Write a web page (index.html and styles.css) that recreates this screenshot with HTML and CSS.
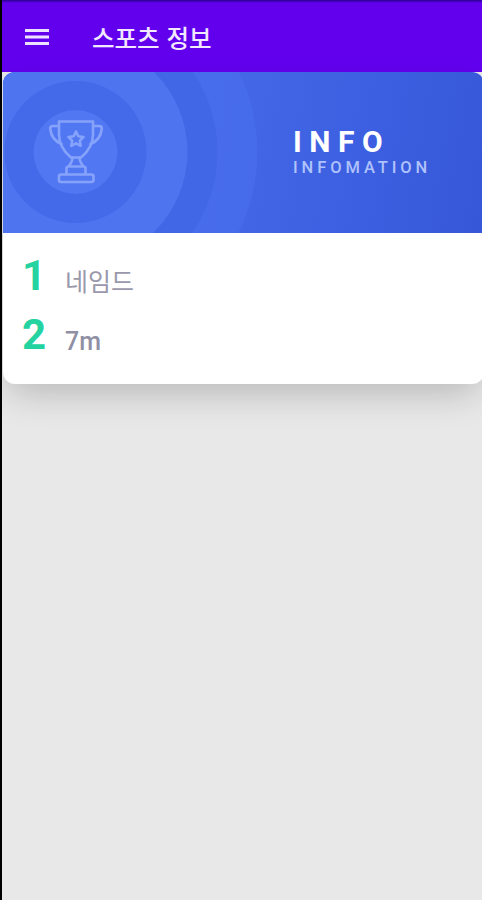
FILE: index.html
```html
<!DOCTYPE html>
<html lang="ko">

<head>
    <meta charset="UTF-8">
    <meta name="viewport" content="width=device-width, initial-scale=1.0">
    <title>스포츠 정보</title>
    <link rel="stylesheet" href="styles.css">
</head>

<body>
    <header class="app-bar">
        <svg class="menu-icon" width="24" height="18" viewBox="0 0 24 18">
            <path d="M0 1.500h24M0 8h24M0 14.500h24" />
        </svg>
        <h1>스포츠 정보</h1>
    </header>

    <main class="card">
        <div class="banner">
            <svg class="rings" width="480" height="161" viewBox="0 0 480 161">
                <circle cx="72.5" cy="80" r="182" fill="#4a6ff0" fill-opacity=".5" />
                <circle cx="72.5" cy="80" r="142" fill="#4166e5" fill-opacity=".85" />
                <circle cx="72.5" cy="80" r="112" fill="#4e74f0" />
                <circle cx="72.5" cy="80" r="71" fill="#4469e9" />
                <circle cx="72.5" cy="80" r="42" fill="#5277f2" />
            </svg>
            <svg class="trophy" width="54" height="64" viewBox="0 0 54 64">
                <path d="M10 1.5h34v13c0 11-6 18-12 23h-10c-6-5-12-12-12-23z" />
                <path d="M10 6H4c-2 0-3 1-2.700 3C2 16 5 21 12.500 24M44 6h6c2 0 3 1 2.700 3C52 16 49 21 41.500 24" />
                <path d="M23.500 37.500c0 4-1.500 6-4 9h15c-2.500-3-4-5-4-9M17.500 54v-5.500q0-2 2-2h15q2 0 2 2V54" />
                <rect x="10" y="54.500" width="34.500" height="7.500" rx="2" />
                <path d="M27 11.500l2.300 4.700 5.200.8-3.700 3.600.9 5.200-4.700-2.500-4.700 2.500.9-5.200-3.700-3.600 5.200-.8z" />
            </svg>
            <div class="banner-text">
                <h2>INFO</h2>
                <p>INFOMATION</p>
            </div>
        </div>
        <ol class="site-list">
            <li><span class="num">1</span><span class="name">네임드</span></li>
            <li><span class="num">2</span><span class="name latin">7m</span></li>
        </ol>
    </main>
</body>

</html>
```
FILE: styles.css
```css
body {
    font-family: Roboto, "Noto Sans CJK KR", sans-serif;
    background: #e8e8e8;
    margin: 0;
    min-height: 100vh;
    box-sizing: border-box;
    border-left: 2px solid #000;
    overflow: hidden;
}

h1,
h2,
p,
ol {
    margin: 0;
    padding: 0;
}

.app-bar {
    height: 72px;
    box-sizing: border-box;
    padding: 4px 0 0 23px;
    display: flex;
    align-items: center;
    gap: 43px;
    background: linear-gradient(#2b0090, #6200ee 3px);
}

.menu-icon {
    stroke: #eee1ff;
    stroke-width: 3;
}

h1 {
    font-family: "Noto Sans CJK KR", sans-serif;
    font-size: 24.5px;
    font-weight: 500;
    line-height: 36px;
    color: #f2e8ff;
}

.card {
    width: 481px;
    height: 312px;
    margin-left: 1px;
    border-radius: 12px;
    background: #fff;
    box-shadow: 0 14px 36px -6px rgba(0, 0, 0, 0.22);
    overflow: hidden;
}

.banner {
    position: relative;
    height: 161px;
    display: flex;
    background: linear-gradient(100deg, #4d73f4 0%, #4366e6 50%, #3b5fe0 75%, #3658d8 100%);
}

.rings {
    position: absolute;
    top: 0;
    left: 0;
}

.trophy {
    position: relative;
    margin: 48px 0 0 46px;
    fill: none;
    stroke: #86a3fb;
    stroke-width: 2.6;
    stroke-linejoin: round;
    stroke-linecap: round;
}

.banner-text {
    position: relative;
    margin: 53px 0 0 190px;
    color: #fff;
}

h2 {
    font-size: 30px;
    line-height: 34px;
    font-weight: 700;
    letter-spacing: 7.5px;
}

.banner-text p {
    font-size: 16.5px;
    line-height: 17px;
    font-weight: 500;
    letter-spacing: 3.9px;
    color: #b0c2fb;
}

.site-list {
    list-style: none;
    padding: 13px 18px 0 19px;
}

.site-list li {
    height: 59px;
    display: flex;
    align-items: baseline;
}

.num {
    width: 43px;
    font-size: 42px;
    line-height: 59px;
    font-weight: 700;
    color: #25d3a0;
}

.name {
    position: relative;
    top: 1px;
    font-size: 25px;
    color: #9999ab;
}

.name.latin {
    font-weight: 500;
    color: #9090a5;
}
```
